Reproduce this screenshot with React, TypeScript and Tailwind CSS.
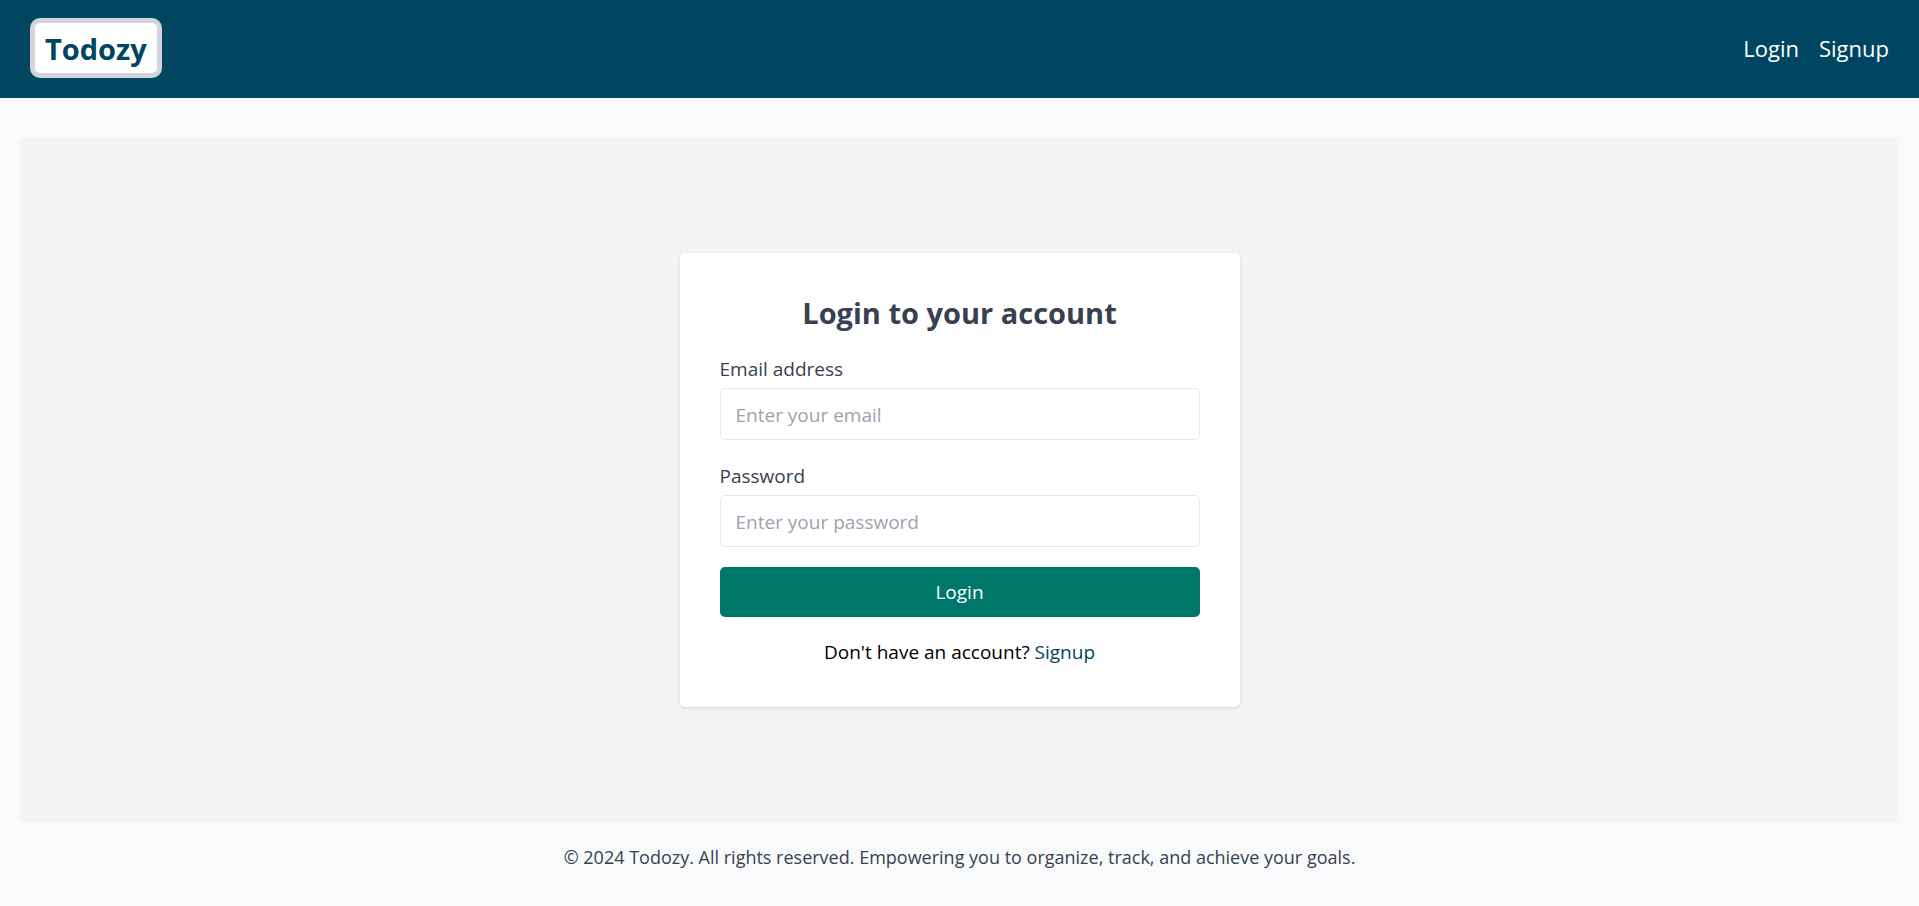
import { useId, type InputHTMLAttributes } from "react";

type FieldProps = InputHTMLAttributes<HTMLInputElement> & { label: string };

function Field({ label, ...inputProps }: FieldProps) {
  const id = useId();
  return (
    <div className="flex flex-col gap-1">
      <label htmlFor={id} className="pt-px leading-[30px] text-[#374151]">
        {label}
      </label>
      <input
        id={id}
        className="h-[52px] w-full rounded-[5px] border border-gray-200 bg-white px-[15px] pt-px text-[#374151] placeholder:text-[#9ca3af] focus:outline-none focus:ring-2 focus:ring-[#004561]"
        {...inputProps}
      />
    </div>
  );
}

function Header() {
  return (
    <header className="flex items-center justify-between bg-[#004561] px-[30px] pt-[18px] pb-5 text-white">
      <a
        href="#home"
        className="rounded-[10px] border-[5px] border-[#d1d5db] bg-white px-[10px] pt-[6px] pb-1 text-[29px] leading-10 font-bold text-[#004561]"
      >
        Todozy
      </a>
      <nav className="flex gap-5 text-[22px] leading-[30px]">
        <a href="#login">Login</a>
        <a href="#signup">Signup</a>
      </nav>
    </header>
  );
}

function LoginCard() {
  return (
    <form
      onSubmit={(event) => event.preventDefault()}
      className="flex w-full max-w-[560px] flex-col gap-5 rounded-[5px] bg-white p-10 shadow-[0_1px_4px_0_rgb(0_0_0/0.1),0_1px_2px_-1px_rgb(0_0_0/0.1)]"
    >
      <h1 className="text-center text-[29px] leading-10 font-bold text-[#374151]">
        Login to your account
      </h1>
      <Field label="Email address" type="email" placeholder="Enter your email" />
      <Field label="Password" type="password" placeholder="Enter your password" />
      <button type="submit" className="h-[50px] rounded-[5px] bg-[#00776b] pt-px text-white">
        Login
      </button>
      <p className="text-center leading-[30px] text-black">
        Don't have an account?{" "}
        <a href="#signup" className="text-[#004561]">
          Signup
        </a>
      </p>
    </form>
  );
}

export default function App() {
  return (
    <div className="flex min-h-screen flex-col bg-[#f9fafc] font-['Open_Sans','Noto_Sans',sans-serif] text-[19px]">
      <Header />
      <main className="flex grow flex-col px-5 pt-10">
        <section className="flex grow items-center justify-center bg-[#f3f4f6] py-10">
          <LoginCard />
        </section>
      </main>
      <footer className="px-5 pt-5 pb-[34px] text-center text-[18px] leading-[30px] text-[#374151]">
        © 2024 Todozy. All rights reserved. Empowering you to organize, track, and achieve your goals.
      </footer>
    </div>
  );
}
